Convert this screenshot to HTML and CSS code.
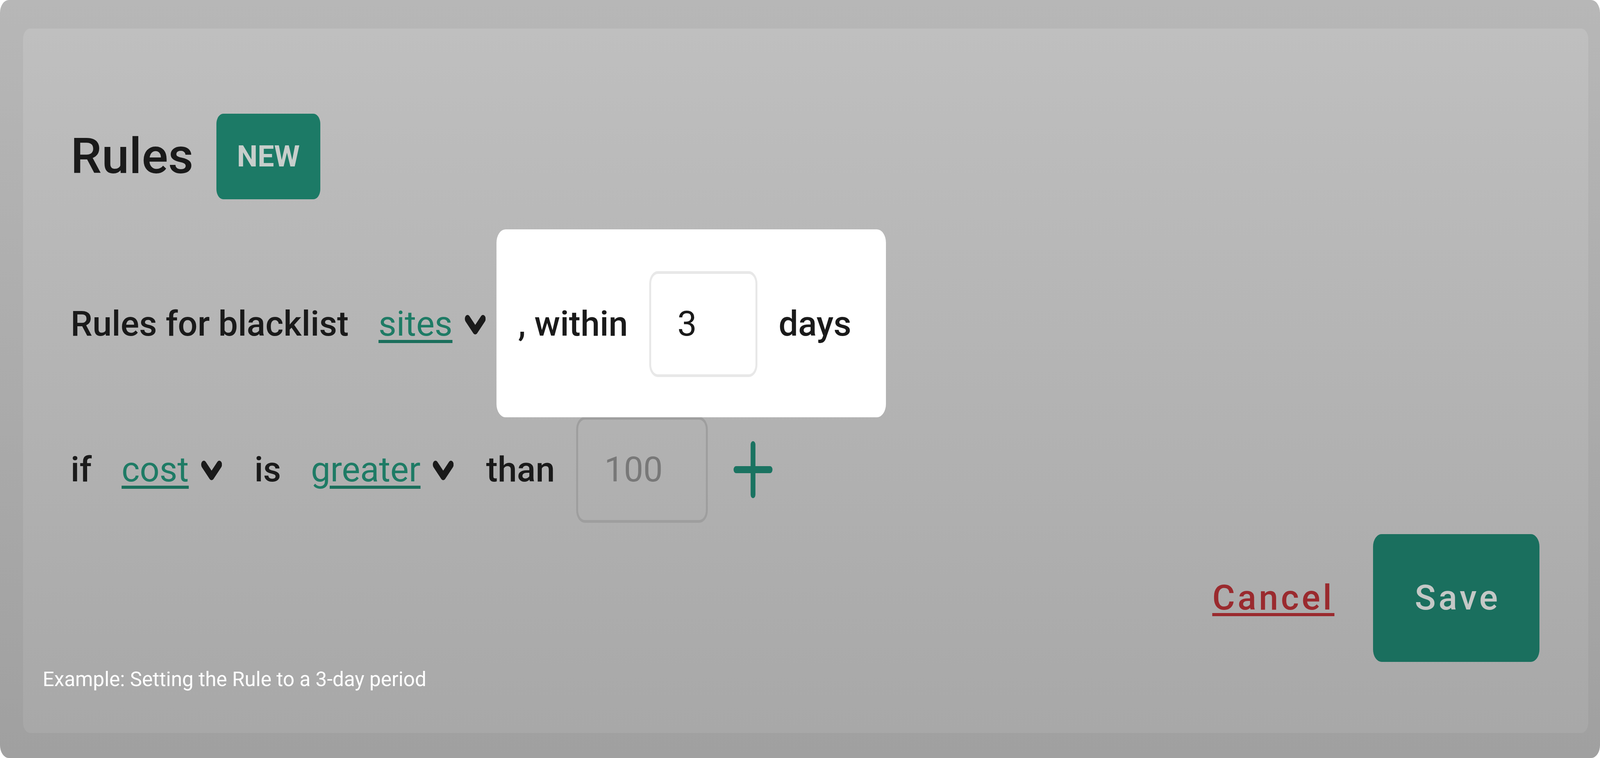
FILE: index.html
```html
<!DOCTYPE html>
<html lang="en">
<head>
<meta charset="utf-8">
<meta name="viewport" content="width=device-width, initial-scale=1">
<title>Rules</title>
<link rel="stylesheet" href="styles.css">
</head>
<body>
<div class="frame">
  <div class="card">
    <div class="content">
      <div class="title-row">
        <h1 class="title">Rules</h1>
        <span class="badge">NEW</span>
      </div>

      <div class="rule-row row-first">
        <span class="word">Rules for blacklist</span>
        <span class="select">
          <a class="link" href="#">sites</a>
          <svg class="chev" viewBox="0 0 78 52" preserveAspectRatio="none" aria-hidden="true"><polyline points="10,10 39,40 68,10"/></svg>
        </span>
        <span class="spot">
          <span class="word">, within</span>
          <input class="num num-days" type="text" value="3">
          <span class="word">days</span>
        </span>
      </div>

      <div class="rule-row row-second">
        <span class="word">if</span>
        <span class="select">
          <a class="link" href="#">cost</a>
          <svg class="chev" viewBox="0 0 78 52" preserveAspectRatio="none" aria-hidden="true"><polyline points="10,10 39,40 68,10"/></svg>
        </span>
        <span class="word">is</span>
        <span class="select">
          <a class="link" href="#">greater</a>
          <svg class="chev" viewBox="0 0 78 52" preserveAspectRatio="none" aria-hidden="true"><polyline points="10,10 39,40 68,10"/></svg>
        </span>
        <span class="group">
          <span class="word">than</span>
          <input class="num num-amount" type="text" placeholder="100">
          <button class="add" type="button" aria-label="Add condition">
            <svg viewBox="0 0 178 178" preserveAspectRatio="none" aria-hidden="true"><line x1="25" y1="89" x2="153" y2="89"/><line x1="89" y1="25" x2="89" y2="153"/></svg>
          </button>
        </span>
      </div>

      <div class="actions">
        <a class="cancel" href="#">Cancel</a>
        <button class="save" type="button">Save</button>
      </div>
    </div>
    <p class="caption">Example: Setting the Rule to a 3-day period</p>
  </div>
</div>
</body>
</html>
```

FILE: styles.css
```css
/* The layout fills the window: horizontal measures in vw, vertical in vh
   (designed on a 6000 x 1940 canvas). */
html,
body {
  margin: 0;
  padding: 0;
  overflow: hidden;
  background: #ffffff;
}

body {
  font-family: "Roboto", "Liberation Sans", sans-serif;
  color: #1a1a1a;
}

.frame {
  box-sizing: border-box;
  width: 100vw;
  height: 100vh;
  padding: 3.763vh 0.733vw 3.299vh 1.433vw;
  border-radius: 0.55vw / 1.7vh;
  background: linear-gradient(180deg, #b7b7b7 0%, #a0a0a0 100%);
  display: flex;
}

.card {
  flex: 1;
  display: flex;
  flex-direction: column;
  border-radius: 0.45vw / 1.392vh;
  background: linear-gradient(180deg, #bfbfbf 0%, #a8a8a8 100%);
}

.content {
  padding: 11.237vh 3.05vw 0 2.983vw;
  display: flex;
  flex-direction: column;
}

/* Title */
.title-row {
  display: flex;
  align-items: center;
  height: 11.289vh;
  margin-bottom: 9.485vh;
}

.title {
  margin: 0 1.433vw 0 0;
  font-size: 3.083vw;
  font-weight: 500;
  line-height: normal;
  color: #1a1a1a;
}

.badge {
  display: inline-flex;
  align-items: center;
  box-sizing: border-box;
  height: 11.289vh;
  padding: 0 1.283vw;
  border-radius: 0.433vw / 1.34vh;
  background: #1c7a66;
  color: #c7cecb;
  font-size: 1.833vw;
  font-weight: 700;
  line-height: 1.2;
}

/* Rule rows */
.rule-row {
  display: flex;
  align-items: center;
  gap: 1.867vw;
  height: 13.969vh;
  font-size: 2.167vw;
  white-space: nowrap;
}

.row-first {
  margin-bottom: 5.258vh;
}

.row-second {
  margin-bottom: 1.495vh;
}

.word {
  font-weight: 500;
  color: #1a1a1a;
}

.select {
  display: inline-flex;
  align-items: center;
  gap: 0.767vw;
  margin-right: 0.167vw;
}

.link {
  font-weight: 400;
  color: #1e7b65;
  text-decoration: underline;
  text-decoration-thickness: 0.412vh;
  text-underline-offset: 0.567vh;
  text-decoration-color: #1b6f5c;
}

.chev {
  width: 1.3vw;
  height: 2.68vh;
  fill: none;
  stroke: #1a1a1a;
  stroke-width: 20;
  stroke-linecap: round;
  stroke-linejoin: round;
  position: relative;
  top: 0.155vh;
}

.spot,
.group {
  display: inline-flex;
  align-items: center;
  gap: 1.333vw;
}

.spot {
  position: relative;
  z-index: 0;
}

.spot::before {
  content: "";
  position: absolute;
  top: -5.516vh;
  bottom: -5.309vh;
  left: -1.35vw;
  right: -2.167vw;
  border-radius: 0.567vw / 1.753vh;
  background: #ffffff;
  z-index: -1;
}

.num {
  box-sizing: border-box;
  height: 13.969vh;
  margin: 0;
  padding: 0 0 0 1.633vw;
  border-radius: 0.533vw / 1.65vh;
  border-style: solid;
  border-width: 0.412vh 0.133vw;
  font-family: "Roboto", "Liberation Sans", sans-serif;
  font-size: 2.167vw;
  font-weight: 400;
  color: #1a1a1a;
  outline: none;
}

.num-days {
  width: 6.75vw;
  border-color: #e8e8e8;
  background: #ffffff;
}

.num-amount {
  width: 8.233vw;
  border-color: #9e9e9e;
  background: transparent;
}

.num-amount::placeholder {
  color: #787878;
  opacity: 1;
}

.add {
  display: inline-flex;
  width: 2.967vw;
  height: 9.175vh;
  padding: 0;
  margin: 0;
  border: 0;
  background: none;
}

.add svg {
  width: 100%;
  height: 100%;
  stroke: #1a7361;
  stroke-width: 18;
  stroke-linecap: round;
}

/* Actions */
.actions {
  display: flex;
  justify-content: flex-end;
  align-items: center;
  gap: 2.417vw;
  height: 16.856vh;
}

.cancel {
  font-size: 2.167vw;
  font-weight: 500;
  letter-spacing: 0.167vw;
  color: #9a2a2e;
  text-decoration: underline;
  text-decoration-thickness: 0.412vh;
  text-underline-offset: 0.464vh;
}

.save {
  display: inline-flex;
  align-items: center;
  justify-content: center;
  box-sizing: border-box;
  width: 10.4vw;
  height: 16.856vh;
  padding: 0 0 0 0.167vw;
  border: 0;
  border-radius: 0.533vw / 1.65vh;
  background: #1a6f5e;
  color: #c4c8c6;
  font-family: "Roboto", "Liberation Sans", sans-serif;
  font-size: 2.167vw;
  font-weight: 500;
  letter-spacing: 0.167vw;
}

/* Caption */
.caption {
  margin: 0.7vh 0 0;
  padding-left: 1.233vw;
  font-size: 1.267vw;
  font-weight: 400;
  line-height: normal;
  color: #ffffff;
}
```
